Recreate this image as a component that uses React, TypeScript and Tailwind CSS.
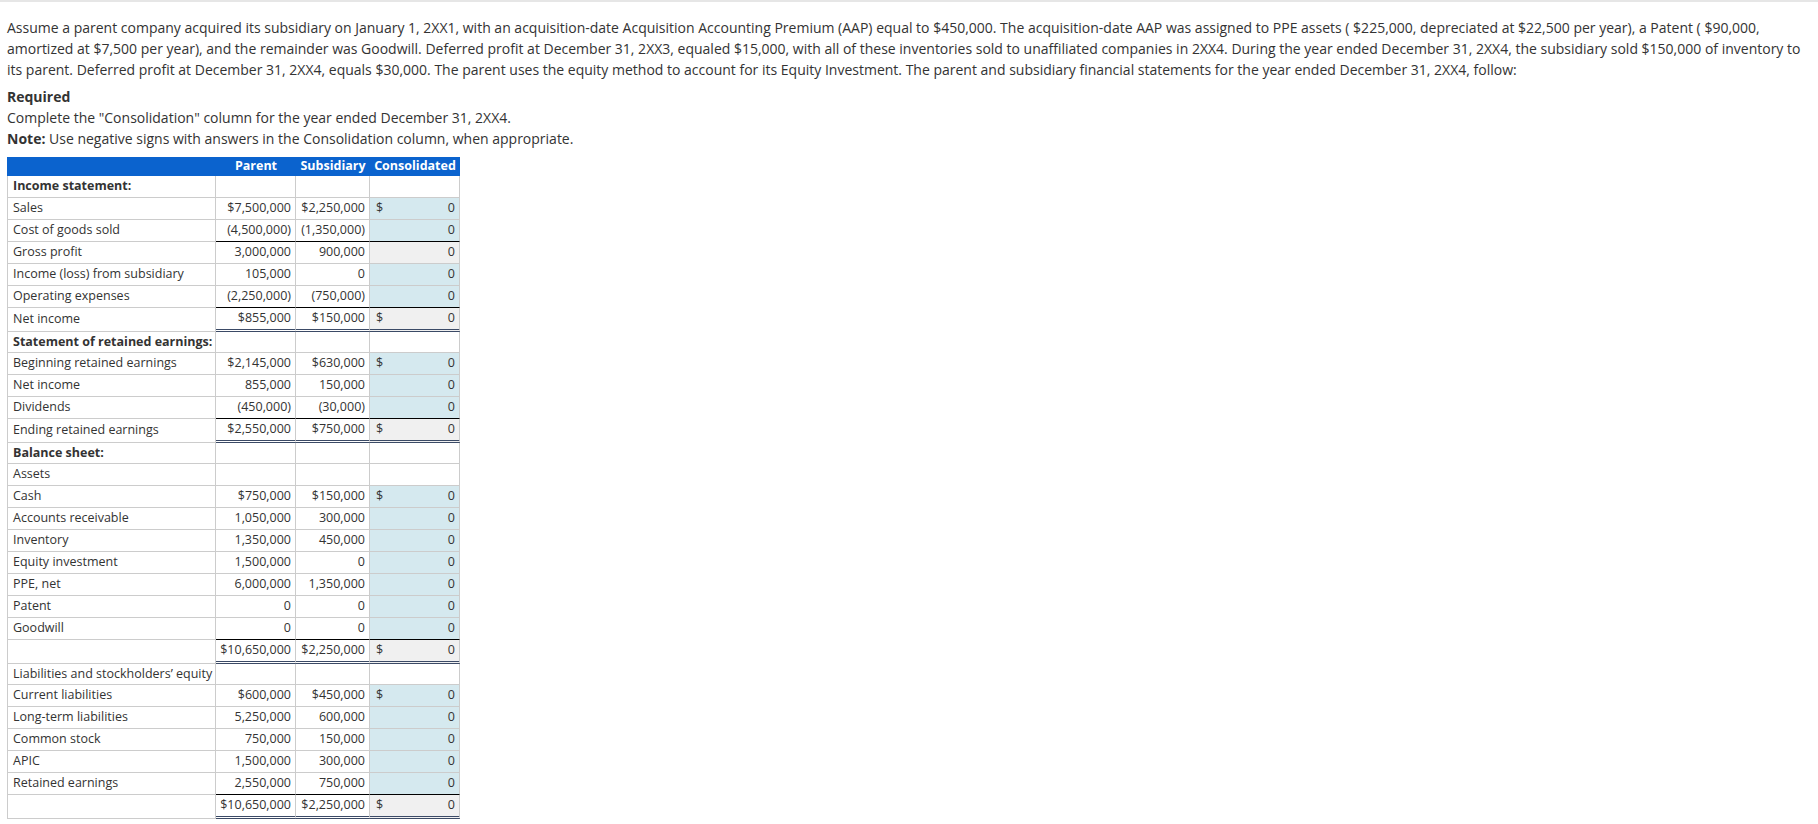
import React from "react"

type Row = {
  label: string
  bold?: boolean
  parent?: string
  sub?: string
  kind?: "input" | "total" | "none"
  dollar?: boolean
  line?: "black" | "double"
}

const rows: Row[] = [
  { label: "Income statement:", bold: true, kind: "none" },
  { label: "Sales", parent: "$7,500,000", sub: "$2,250,000", kind: "input", dollar: true },
  { label: "Cost of goods sold", parent: "(4,500,000)", sub: "(1,350,000)", kind: "input", line: "black" },
  { label: "Gross profit", parent: "3,000,000", sub: "900,000", kind: "total" },
  { label: "Income (loss) from subsidiary", parent: "105,000", sub: "0", kind: "input" },
  { label: "Operating expenses", parent: "(2,250,000)", sub: "(750,000)", kind: "input", line: "black" },
  { label: "Net income", parent: "$855,000", sub: "$150,000", kind: "total", dollar: true, line: "double" },
  { label: "Statement of retained earnings:", bold: true, kind: "none" },
  { label: "Beginning retained earnings", parent: "$2,145,000", sub: "$630,000", kind: "input", dollar: true },
  { label: "Net income", parent: "855,000", sub: "150,000", kind: "input" },
  { label: "Dividends", parent: "(450,000)", sub: "(30,000)", kind: "input", line: "black" },
  { label: "Ending retained earnings", parent: "$2,550,000", sub: "$750,000", kind: "total", dollar: true, line: "double" },
  { label: "Balance sheet:", bold: true, kind: "none" },
  { label: "Assets", kind: "none" },
  { label: "Cash", parent: "$750,000", sub: "$150,000", kind: "input", dollar: true },
  { label: "Accounts receivable", parent: "1,050,000", sub: "300,000", kind: "input" },
  { label: "Inventory", parent: "1,350,000", sub: "450,000", kind: "input" },
  { label: "Equity investment", parent: "1,500,000", sub: "0", kind: "input" },
  { label: "PPE, net", parent: "6,000,000", sub: "1,350,000", kind: "input" },
  { label: "Patent", parent: "0", sub: "0", kind: "input" },
  { label: "Goodwill", parent: "0", sub: "0", kind: "input", line: "black" },
  { label: "", parent: "$10,650,000", sub: "$2,250,000", kind: "total", dollar: true, line: "double" },
  { label: "Liabilities and stockholders’ equity", kind: "none" },
  { label: "Current liabilities", parent: "$600,000", sub: "$450,000", kind: "input", dollar: true },
  { label: "Long-term liabilities", parent: "5,250,000", sub: "600,000", kind: "input" },
  { label: "Common stock", parent: "750,000", sub: "150,000", kind: "input" },
  { label: "APIC", parent: "1,500,000", sub: "300,000", kind: "input" },
  { label: "Retained earnings", parent: "2,550,000", sub: "750,000", kind: "input", line: "black" },
  { label: "", parent: "$10,650,000", sub: "$2,250,000", kind: "total", dollar: true, line: "double" },
]

const lineClass = (line: "black" | "double" | undefined, short: boolean) =>
  line === "double"
    ? "h-[24px] border-b-[3px] border-double border-b-[#3b4a66]"
    : line === "black"
      ? "h-[22px] border-b border-b-black"
      : short
        ? "h-[21px] border-b border-b-[#cccccc]"
        : "h-[22px] border-b border-b-[#cccccc]"

const TableRow = ({ row, short }: { row: Row; short: boolean }) => {
  const consBg = row.kind === "input" ? "bg-[#d5e9ef]" : row.kind === "total" ? "bg-[#f0f0f0]" : "bg-white"
  const lc = lineClass(row.line, short)
  return (
    <div className="flex">
      <div
        className={`w-[209px] border-l border-r border-b border-[#cccccc] pl-[5px] flex items-center ${
          row.bold ? "font-bold" : ""
        }`}
      >
        {row.label}
      </div>
      <div className={`w-[80px] border-r border-r-[#cccccc] pr-[4px] flex items-center justify-end ${lc}`}>
        {row.parent}
      </div>
      <div className={`w-[74px] border-r border-r-[#cccccc] pr-[4px] flex items-center justify-end ${lc}`}>
        {row.sub}
      </div>
      <div className={`w-[90px] border-r border-r-[#cccccc] pr-[4px] pl-[6px] flex items-center justify-between ${consBg} ${lc}`}>
        <span>{row.dollar ? "$" : ""}</span>
        <span>{row.kind === "none" ? "" : "0"}</span>
      </div>
    </div>
  )
}

export default function App() {
  return (
    <div className="min-h-screen bg-white border-t-2 border-[#e6e6e6] px-[7px] pt-[15px] text-[#333333] font-['Open_Sans',sans-serif]">
      <div className="text-[14px] leading-[21px]">
        <p className="whitespace-nowrap">
          Assume a parent company acquired its subsidiary on January 1, 2XX1, with an acquisition-date Acquisition
          Accounting Premium (AAP) equal to $450,000. The acquisition-date AAP was assigned to PPE assets ( $225,000,
          depreciated at $22,500 per year), a Patent ( $90,000,
        </p>
        <p className="whitespace-nowrap">
          amortized at $7,500 per year), and the remainder was Goodwill. Deferred profit at December 31, 2XX3, equaled
          $15,000, with all of these inventories sold to unaffiliated companies in 2XX4. During the year ended December
          31, 2XX4, the subsidiary sold $150,000 of inventory to
        </p>
        <p className="whitespace-nowrap">
          its parent. Deferred profit at December 31, 2XX4, equals $30,000. The parent uses the equity method to account
          for its Equity Investment. The parent and subsidiary financial statements for the year ended December 31,
          2XX4, follow:
        </p>
      </div>
      <div className="mt-[6px] text-[14px] leading-[21px]">
        <div className="font-bold">Required</div>
        <div>Complete the "Consolidation" column for the year ended December 31, 2XX4.</div>
        <div>
          <span className="font-bold">Note:</span> Use negative signs with answers in the Consolidation column, when
          appropriate.
        </div>
      </div>
      <div className="mt-[8px] w-max text-[12.5px] leading-none">
        <div className="flex h-[19px] bg-[#0b63ce] text-white font-bold items-center">
          <div className="w-[209px]" />
          <div className="w-[80px] text-center">Parent</div>
          <div className="w-[74px] text-center">Subsidiary</div>
          <div className="w-[90px] text-center">Consolidated</div>
        </div>
        {rows.map((r, i) => (
          <TableRow key={i} row={r} short={i > 0 && rows[i - 1].line === "double"} />
        ))}
      </div>
    </div>
  )
}
